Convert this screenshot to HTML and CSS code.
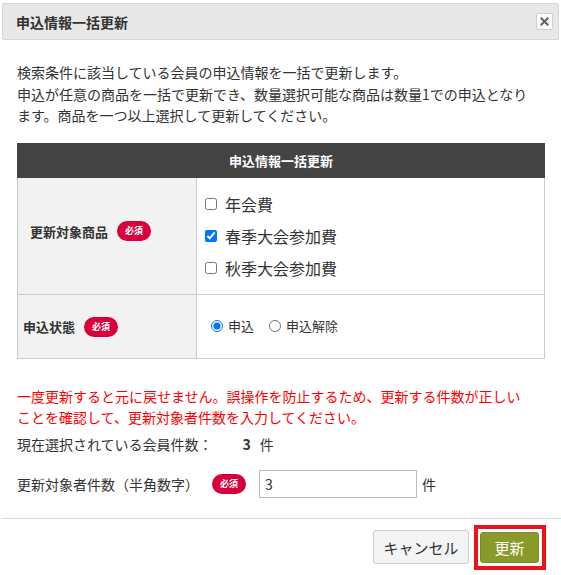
FILE: index.html
```html
<!DOCTYPE html>
<html lang="ja">
<head>
<meta charset="utf-8">
<title>申込情報一括更新</title>
<link rel="stylesheet" href="styles.css">
</head>
<body>
<div class="dialog">
  <div class="dialog-header">
    <span class="dialog-title">申込情報一括更新</span>
    <button class="close-btn" type="button" aria-label="close">
      <svg width="9" height="9" viewBox="0 0 9 9"><path d="M1.5 1.5 L7.5 7.5 M7.5 1.5 L1.5 7.5" stroke="#666" stroke-width="2.2" stroke-linecap="square"/></svg>
    </button>
  </div>
  <div class="dialog-body">
    <p class="intro">検索条件に該当している会員の申込情報を一括で更新します。<br>申込が任意の商品を一括で更新でき、数量選択可能な商品は数量1での申込となり<br>ます。商品を一つ以上選択して更新してください。</p>
    <table class="form-table">
      <thead>
        <tr><th colspan="2">申込情報一括更新</th></tr>
      </thead>
      <tbody>
        <tr class="row-products">
          <td class="label-cell label-cell-wide"><span class="label-text">更新対象商品</span><span class="badge">必須</span></td>
          <td class="value-cell">
            <label class="check-item"><input type="checkbox"><span>年会費</span></label>
            <label class="check-item"><input type="checkbox" checked><span>春季大会参加費</span></label>
            <label class="check-item"><input type="checkbox"><span>秋季大会参加費</span></label>
          </td>
        </tr>
        <tr class="row-status">
          <td class="label-cell label-cell-narrow"><span class="label-text">申込状態</span><span class="badge">必須</span></td>
          <td class="value-cell radio-cell">
            <label class="radio-item"><input type="radio" name="st" checked><span>申込</span></label>
            <label class="radio-item"><input type="radio" name="st"><span>申込解除</span></label>
          </td>
        </tr>
      </tbody>
    </table>
    <p class="warning">一度更新すると元に戻せません。誤操作を防止するため、更新する件数が正しい<br>ことを確認して、更新対象者件数を入力してください。</p>
    <p class="count-line"><span>現在選択されている会員件数：</span><span class="count-num">3</span><span>件</span></p>
    <div class="input-row">
      <span class="input-label">更新対象者件数（半角数字）</span>
      <span class="badge">必須</span>
      <input class="num-input" type="text" value="3">
      <span class="unit">件</span>
    </div>
  </div>
  <div class="dialog-footer">
    <button class="btn btn-cancel" type="button">キャンセル</button>
    <span class="highlight"><button class="btn btn-submit" type="button">更新</button></span>
  </div>
</div>
</body>
</html>
```
FILE: styles.css
```css
* { box-sizing: border-box; }
body {
  margin: 0;
  font-family: "Noto Sans CJK JP", "Noto Sans", sans-serif;
  font-size: 14px;
  color: #333;
  background: #fff;
}
.dialog { width: 561px; }
.dialog-header {
  margin: 3px 2px 0 2px;
  height: 37px;
  border: 1px solid #d6d6d6;
  border-radius: 2px;
  background: #e8e8e8;
  display: flex;
  align-items: center;
  justify-content: space-between;
  padding: 0 5px 0 13px;
}
.dialog-title { font-weight: bold; font-size: 14px; color: #333; }
.close-btn {
  width: 17px; height: 17px;
  padding: 0;
  border: 1px solid #cfcfcf;
  border-radius: 2px;
  background: #fafafa;
  display: flex; align-items: center; justify-content: center;
}
.dialog-body { padding: 22px 16px 0 17px; }
.intro { margin: 0; line-height: 21.5px; }
.form-table {
  margin-top: 16px;
  width: 100%;
  border-collapse: collapse;
  border: 1px solid #ccc;
}
.form-table th {
  background: #444;
  color: #fff;
  font-size: 13px;
  font-weight: bold;
  height: 34px;
  padding: 0;
  border: 1px solid #444;
}
.form-table td { border: 1px solid #ccc; padding: 0; }
.label-cell {
  width: 179px;
  background: #f2f2f2;
  font-size: 13px;
  font-weight: bold;
  vertical-align: middle;
}
.label-cell-wide { padding: 0 0 10px 12px !important; }
.label-cell-narrow { padding: 0 0 0 5px !important; }
.label-text { vertical-align: middle; }
.badge {
  display: inline-block;
  width: 34px; height: 20px;
  line-height: 20px;
  border-radius: 10px;
  background: #d7003a;
  color: #fff;
  font-size: 9px;
  font-weight: bold;
  text-align: center;
  vertical-align: middle;
  margin-left: 9px;
}
.row-products td { height: 116px; }
.row-products .value-cell { padding: 10px 0 10px 8px; }
.check-item {
  display: flex;
  align-items: center;
  height: 32px;
  font-size: 16px;
}
.check-item input { margin: 0 8px 0 0; width: 12px; height: 12px; }
.row-status td { height: 64px; }
.radio-cell { padding-left: 14px !important; font-size: 13px; }
.radio-item { display: inline-flex; align-items: center; margin-right: 12px; }
.radio-item input { margin: 0 5px 0 0; width: 12px; height: 12px; }
.warning {
  margin: 27px 0 0;
  color: #f00;
  line-height: 21.5px;
}
.count-line { margin: 4px 0 0; line-height: 22px; }
.count-num { font-weight: bold; margin: 0 9px 0 30px; }
.input-row {
  margin-top: 15px;
  display: flex;
  align-items: center;
  height: 28px;
}
.input-row .badge { margin-left: 13px; }
.num-input {
  margin-left: 13px;
  width: 158px; height: 28px;
  border: 1px solid #bbb;
  padding: 0 5px;
  font-family: "Noto Sans CJK JP", sans-serif;
  font-size: 14px;
  color: #333;
}
.unit { margin-left: 5px; }
.dialog-footer {
  margin: 20px 0 0 2px;
  border-top: 1px solid #ddd;
  padding: 6px 15px 0 0;
  display: flex;
  justify-content: flex-end;
  align-items: center;
  gap: 5px;
}
.btn {
  font-family: "Noto Sans CJK JP", sans-serif;
  font-size: 15px;
  border-radius: 3px;
  height: 34px;
  padding: 0;
}
.btn-cancel {
  width: 96px;
  background: #f4f4f4;
  border: 1px solid #ccc;
  color: #333;
}
.highlight {
  display: flex;
  border: 4px solid #e8141e;
  padding: 3px 3px 3px 2px;
}
.btn-submit {
  width: 59px;
  height: 31px;
  background: #8a9a2a;
  border: 1px solid #7d8c22;
  color: #fff;
}
```
